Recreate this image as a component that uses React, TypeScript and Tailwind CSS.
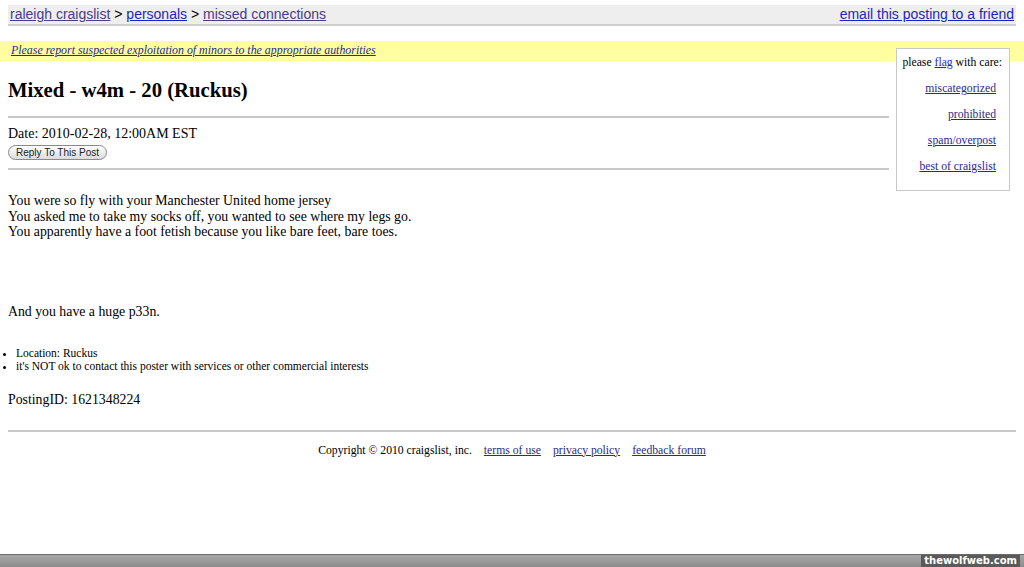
const serif = { fontFamily: '"Liberation Serif", "Times New Roman", serif' }

const App = () => {
	return (
		<div className="relative h-[567px] w-[1024px] overflow-hidden bg-white text-black" style={serif}>
			<div className="px-2 pt-[5px]">
				<div className="flex h-[21px] items-center justify-between border-b-2 border-[#cfcfcf] bg-[#eeeeee] px-[2px] font-['Liberation_Sans',Arial,sans-serif] text-[14px]">
					<div>
						<a href="#" className="text-[#4b3a8c] underline">raleigh craigslist</a>
						<span> &gt; </span>
						<a href="#" className="text-[#1f1fc8] underline">personals</a>
						<span> &gt; </span>
						<a href="#" className="text-[#4b3a8c] underline">missed connections</a>
					</div>
					<a href="#" className="text-[#1f1fc8] underline">email this posting to a friend</a>
				</div>
			</div>

			<div className="mt-[15px] flex h-[20px] items-center bg-[#ffffa0] pl-[11px]">
				<a href="#" className="text-[11.9px] italic text-[#2a2a8a] underline">
					Please report suspected exploitation of minors to the appropriate authorities
				</a>
			</div>

			<div className="absolute right-[14px] top-[48px] w-[114px] border border-[#c8c8c8] bg-white pb-[17px] pr-[13px] pt-[7px] text-right text-[11.7px] leading-[13px]">
				<div className="-mr-[6px] whitespace-nowrap">
					please <a href="#" className="text-[#1f1fc8] underline">flag</a> with care:
				</div>
				<div className="mt-[13px] flex flex-col gap-[13px] whitespace-nowrap">
					<a href="#" className="text-[#2a2a8a] underline">miscategorized</a>
					<a href="#" className="text-[#2a2a8a] underline">prohibited</a>
					<a href="#" className="text-[#2a2a8a] underline">spam/overpost</a>
					<a href="#" className="text-[#2a2a8a] underline">best of craigslist</a>
				</div>
			</div>

			<div className="pl-2 pr-[135px]">
				<h2 className="mt-[16px] text-[20.7px] font-bold leading-[26px]">Mixed - w4m - 20 (Ruckus)</h2>
				<hr className="mt-[13px] border-t-2 border-[#c8c8c8]" />
				<div className="mt-[8px] text-[14px] leading-[16px]">Date: 2010-02-28, 12:00AM EST</div>
				<button className="mt-[3px] block h-[15px] rounded-[8px] border border-[#8a8a8a] bg-gradient-to-b from-white to-[#dcdcdc] px-[7px] font-['Liberation_Sans',Arial,sans-serif] text-[10px] leading-[12px] text-[#222]">
					Reply To This Post
				</button>
				<hr className="mt-[8px] border-t-2 border-[#c8c8c8]" />
			</div>

			<div className="pl-2 pt-[23px] text-[13.8px] leading-[15.5px]">
				<div>You were so fly with your Manchester United home jersey</div>
				<div>You asked me to take my socks off, you wanted to see where my legs go.</div>
				<div>You apparently have a foot fetish because you like bare feet, bare toes.</div>
				<div className="mt-[64px]">And you have a huge p33n.</div>

				<ul className="mt-[28px] list-disc pl-[8px] text-[11.5px] leading-[13px]">
					<li>Location: Ruckus</li>
					<li>it's NOT ok to contact this poster with services or other commercial interests</li>
				</ul>

				<div className="mt-[19px]">PostingID: 1621348224</div>
			</div>

			<div className="px-2">
				<hr className="mt-[22px] border-t-2 border-[#c8c8c8]" />
				<div className="mt-[10px] flex justify-center gap-[12px] text-[11.7px]">
					<span>Copyright © 2010 craigslist, inc.</span>
					<a href="#" className="text-[#2a2a8a] underline">terms of use</a>
					<a href="#" className="text-[#2a2a8a] underline">privacy policy</a>
					<a href="#" className="text-[#2a2a8a] underline">feedback forum</a>
				</div>
			</div>

			<div className="absolute bottom-0 left-0 flex h-[13px] w-full justify-end border-t border-[#6a6a6a] bg-gradient-to-b from-[#a8a8a8] to-[#8c8c8c]">
				<div className="mr-[4px] flex h-full items-center bg-[#5a5a5a] px-[3px] font-['DejaVu_Sans',Verdana,sans-serif] text-[10px] font-bold leading-none text-white">
					thewolfweb.com
				</div>
			</div>
		</div>
	)
}

export default App
